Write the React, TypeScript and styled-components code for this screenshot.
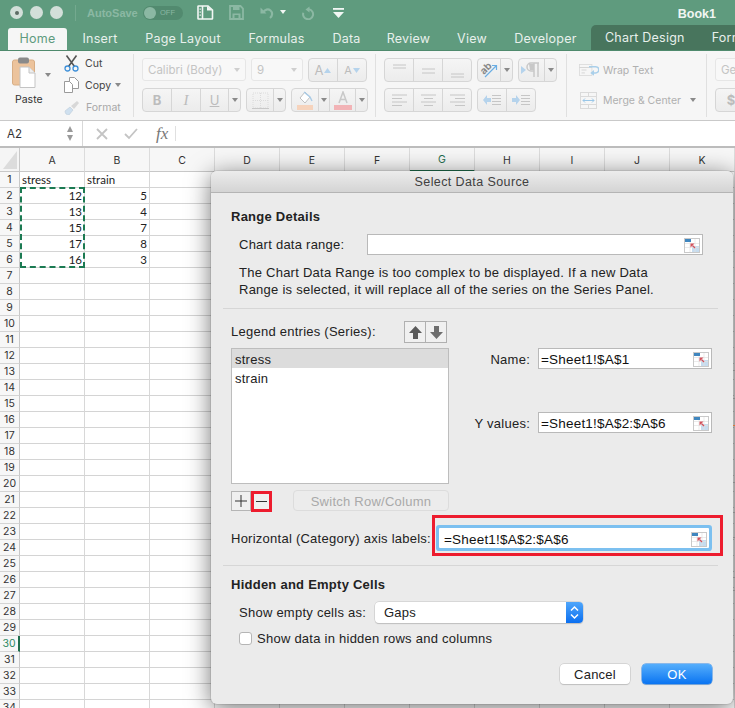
import React from "react";
import styled, { createGlobalStyle } from "styled-components";

const Global = createGlobalStyle`
  html, body { margin: 0; padding: 0; background: #fff; }
  * { box-sizing: border-box; }
  body { font-family: "Liberation Sans", Arial, sans-serif; }
`;

const Page = styled.div`
  position: relative;
  width: 735px;
  height: 708px;
  overflow: hidden;
  display: flex;
  flex-direction: column;
  background: #fff;
  font-family: "Liberation Sans", Arial, sans-serif;
`;

/* ---------- Title bar ---------- */
const TitleBar = styled.div`
  height: 25px;
  flex: none;
  background: #5f9b7e;
  display: flex;
  align-items: center;
  padding-left: 10px;
`;
const Light = styled.span<{ $dot?: boolean }>`
  width: 13px;
  height: 13px;
  border-radius: 50%;
  background: #d3dfd9;
  margin-right: 7px;
  display: flex;
  align-items: center;
  justify-content: center;
  &::after {
    content: "";
    width: 4px;
    height: 4px;
    border-radius: 50%;
    background: ${(p) => (p.$dot ? "#5d6b64" : "transparent")};
  }
`;
const TitleDivider = styled.span`
  width: 1px;
  height: 16px;
  background: #74a98f;
  margin: 0 11px 0 5px;
`;
const AutoSave = styled.span`
  font-size: 11px;
  font-weight: 700;
  color: #8bb8a3;
  width: 56px;
  padding-top: 1px;
`;
const Toggle = styled.span`
  width: 40px;
  height: 14px;
  border-radius: 7px;
  background: #528a6f;
  display: flex;
  align-items: center;
  padding-left: 1px;
  font-size: 7.5px;
  color: #8bb8a3;
  margin-right: 14px;
  &::before {
    content: "";
    width: 12px;
    height: 12px;
    border-radius: 50%;
    background: #8bb8a3;
    margin-right: 4px;
  }
`;
const QuickIcons = styled.div`
  display: flex;
  align-items: center;
  height: 25px;
`;
const BookTitle = styled.span`
  margin-left: auto;
  margin-right: 19px;
  padding-top: 2px;
  font-size: 12.5px;
  font-weight: 700;
  color: #f1f6f3;
`;

/* ---------- Tabs ---------- */
const TabBar = styled.div`
  height: 25px;
  flex: none;
  background: #5f9b7e;
  display: flex;
  align-items: flex-end;
  padding-left: 8px;
  font-family: "Inter", sans-serif;
  font-size: 12.5px;
  letter-spacing: 0.22px;
  overflow: hidden;
  white-space: nowrap;
`;
const Tab = styled.div<{ $w: number; $active?: boolean }>`
  width: ${(p) => p.$w}px;
  flex: none;
  height: 22px;
  padding-bottom: 2px;
  display: flex;
  align-items: center;
  justify-content: center;
  color: ${(p) => (p.$active ? "#5f9b7e" : "#e8f0ec")};
  background: ${(p) => (p.$active ? "#f6f6f6" : "transparent")};
  border-radius: 3px 3px 0 0;
`;
const ContextTab = styled.div`
  flex: 1;
  height: 25px;
  padding: 0 0 1px 14px;
  background: #48755d;
  border-radius: 5px 0 0 0;
  color: #e8f0ec;
  display: flex;
  align-items: center;
  gap: 27px;
`;

/* ---------- Ribbon ---------- */
const Ribbon = styled.div`
  height: 71px;
  flex: none;
  background: #f6f6f6;
  border-top: 1px solid #4f8a6d;
  border-bottom: 1px solid #c9c9c9;
  display: flex;
  overflow: hidden;
  font-family: "Inter", sans-serif;
`;
const Group = styled.div<{ $w: number; $pl: number }>`
  width: ${(p) => p.$w}px;
  flex: none;
  height: 63px;
  margin-top: 3px;
  padding-left: ${(p) => p.$pl}px;
  padding-top: 4px;
  border-right: 1px solid #e0e0e0;
  display: flex;
  flex-direction: column;
  gap: 6px;
`;
const ClipGroup = styled.div`
  width: 134px;
  flex: none;
  height: 63px;
  margin-top: 3px;
  border-right: 1px solid #e0e0e0;
  display: flex;
  font-size: 10.5px;
  color: #444;
`;
const PasteCol = styled.div`
  width: 64px;
  flex: none;
  position: relative;
  display: flex;
  flex-direction: column;
  padding-left: 12px;
  padding-top: 3px;
  gap: 5px;
`;
const PasteLabel = styled.span`
  margin-left: 3px;
  color: #333;
`;
const SmallCol = styled.div`
  display: flex;
  flex-direction: column;
  gap: 3px;
`;
const SmallRow = styled.div<{ $off?: boolean }>`
  height: 20px;
  display: flex;
  align-items: center;
  gap: 6px;
  margin-top: ${(p) => (p.$off ? 1 : 0)}px;
  color: ${(p) => (p.$off ? "#a8a8a8" : "#444")};
`;
const Arrow = styled.span<{ $c?: string }>`
  width: 0;
  height: 0;
  flex: none;
  border-left: 3px solid transparent;
  border-right: 3px solid transparent;
  border-top: 4px solid ${(p) => p.$c || "#8a8a8a"};
`;
const PasteArrow = styled(Arrow)`
  position: absolute;
  left: 45px;
  top: 19px;
`;
const CopyArrow = styled(Arrow)`
  margin-left: -2px;
`;
const RibbonRow = styled.div`
  display: flex;
  gap: 5px;
  height: 24px;
`;
const Combo = styled.div<{ $w: number }>`
  width: ${(p) => p.$w}px;
  height: 23px;
  flex: none;
  border: 1px solid #e6e6e6;
  border-radius: 3px;
  background: #f8f8f8;
  display: flex;
  align-items: center;
  justify-content: space-between;
  padding: 0 5px;
  font-size: 11.5px;
  color: #c4c4c4;
  white-space: nowrap;
`;
const Seg = styled.div`
  display: flex;
  height: 24px;
  flex: none;
  border: 1px solid #d6d6d6;
  border-radius: 4px;
  background: linear-gradient(#f5f5f5, #ececec);
  overflow: hidden;
`;
const SegCell = styled.div<{ $w: number }>`
  width: ${(p) => p.$w}px;
  flex: none;
  display: flex;
  align-items: center;
  justify-content: center;
  gap: 1px;
  color: #bcbcbc;
  font-size: 13px;
  font-weight: 700;
  border-right: 1px solid #d6d6d6;
  &:last-child { border-right: 0; }
`;
const ItalicGlyph = styled.span`
  font-family: "Liberation Serif", serif;
  font-style: italic;
  font-weight: 400;
  font-size: 15px;
`;
const UnderGlyph = styled.span`
  text-decoration: underline;
  font-weight: 400;
`;
const WrapRow = styled.div`
  height: 24px;
  display: flex;
  align-items: center;
  gap: 4px;
  font-size: 10.5px;
  color: #b0b0b0;
  white-space: nowrap;
`;
const MergeArrow = styled(Arrow)`
  margin-left: 5px;
`;

/* ---------- Formula bar ---------- */
const FormulaBar = styled.div`
  height: 27px;
  flex: none;
  background: #fff;
  border-bottom: 2px solid #bdbdbd;
  display: flex;
  align-items: center;
  font-family: "Inter", sans-serif;
`;
const NameBox = styled.div`
  width: 83px;
  height: 100%;
  flex: none;
  border-right: 1px solid #d8d8d8;
  display: flex;
  align-items: center;
  justify-content: space-between;
  padding: 0 9px 0 7px;
  font-size: 11.5px;
  color: #333;
`;
const Spinner = styled.span`
  display: flex;
  flex-direction: column;
  gap: 3px;
`;
const UpArrow = styled.span`
  width: 0;
  height: 0;
  border-left: 3px solid transparent;
  border-right: 3px solid transparent;
  border-bottom: 6px solid #9a9a9a;
`;
const DownArrow = styled(UpArrow)`
  border-bottom: 0;
  border-top: 6px solid #9a9a9a;
`;
const FormulaIcons = styled.div`
  display: flex;
  align-items: center;
  padding-left: 13px;
  gap: 16px;
`;
const Fx = styled.span`
  font-family: "Liberation Serif", serif;
  font-style: italic;
  font-size: 17px;
  color: #777;
  margin-left: 2px;
  padding-right: 7px;
  border-right: 1px solid #e0e0e0;
  line-height: 15px;
`;

/* ---------- Sheet ---------- */
const Sheet = styled.div`
  position: relative;
  flex: 1;
  display: grid;
  grid-template-columns: 20px repeat(11, 65px);
  grid-template-rows: 24px repeat(34, 16px);
  overflow: hidden;
  font-family: "Lato", sans-serif;
  font-size: 11.5px;
  color: #222;
`;
const Corner = styled.div`
  background: #f5f5f5;
  border-right: 1px solid #c8c8c8;
  border-bottom: 1px solid #c8c8c8;
  padding: 3px 2px 2px 3px;
  &::after {
    content: "";
    display: block;
    width: 100%;
    height: 100%;
    background: #dcdcdc;
    clip-path: polygon(100% 0, 100% 100%, 0 100%);
  }
`;
const ColHead = styled.div<{ $on?: boolean }>`
  background: #f7f7f7;
  border-right: 1px solid #dcdcdc;
  border-bottom: ${(p) => (p.$on ? "2px solid #1f6e4d" : "1px solid #c8c8c8")};
  color: ${(p) => (p.$on ? "#1f6e4d" : "#333")};
  display: flex;
  align-items: center;
  justify-content: center;
  padding-top: 1px;
  font-family: "Inter", sans-serif;
  font-size: 10.5px;
`;
const RowHead = styled.div<{ $on?: boolean }>`
  background: #f7f7f7;
  border-right: ${(p) => (p.$on ? "2px solid #1f6e4d" : "1px solid #c8c8c8")};
  border-bottom: 1px solid #d4d4d4;
  color: ${(p) => (p.$on ? "#2f8a63" : "#333")};
  display: flex;
  align-items: center;
  justify-content: center;
  font-family: "Inter", sans-serif;
  font-size: 10.5px;
`;
const Cell = styled.div<{ $num?: boolean }>`
  border-right: 1px solid #d8d8d8;
  border-bottom: 1px solid #d4d4d4;
  display: flex;
  align-items: center;
  justify-content: ${(p) => (p.$num ? "flex-end" : "flex-start")};
  padding: 0 2px;
  line-height: 15px;
  white-space: nowrap;
`;
const Marquee = styled.div`
  position: absolute;
  grid-column: 2 / 3;
  grid-row: 3 / 8;
  inset: -1px 0 0 0;
  border: 2px dashed #1b7a52;
  pointer-events: none;
`;

/* ---------- Dialog ---------- */
const Dialog = styled.div`
  position: absolute;
  left: 211px;
  top: 171px;
  width: 522px;
  height: 533px;
  background: #ebebeb;
  border-radius: 6px;
  box-shadow: 0 4px 24px rgba(0, 0, 0, 0.55), 0 0 0 1px rgba(0, 0, 0, 0.08);
  color: #222;
  font-size: 13px;
  letter-spacing: 0.25px;
  overflow: hidden;
`;
const DialogTitle = styled.div`
  height: 22px;
  background: linear-gradient(#ececec, #d4d4d4);
  border-bottom: 1px solid #b4b4b4;
  display: flex;
  align-items: center;
  justify-content: center;
  font-size: 12.5px;
  letter-spacing: 0.4px;
  color: #404040;
`;
const DialogBody = styled.div`
  padding: 0 21px 0 20px;
  display: flex;
  flex-direction: column;
`;
const SectionTitle = styled.div<{ $top: number }>`
  margin-top: ${(p) => p.$top}px;
  font-weight: 700;
  line-height: 16px;
  height: 16px;
`;
const RangeRow = styled.div`
  margin-top: 9px;
  margin-left: 8px;
  display: flex;
  align-items: center;
`;
const RangeLabel = styled.label`
  width: 128px;
  flex: none;
`;
const RefInput = styled.div<{ $w: number }>`
  width: ${(p) => p.$w}px;
  height: 21px;
  flex: none;
  background: #fff;
  border: 1px solid #b9b9b9;
  display: flex;
  align-items: center;
  justify-content: space-between;
  padding: 1px 2px 0 2px;
  font-size: 13.5px;
  letter-spacing: 0.2px;
  white-space: nowrap;
  color: #111;
`;
const Description = styled.p`
  margin: 9px 0 0 8px;
  line-height: 17px;
  white-space: nowrap;
`;
const Rule = styled.hr<{ $top: number }>`
  margin: ${(p) => p.$top}px -6px 0 -8px;
  border: 0;
  height: 1px;
  background: #d6d6d6;
  flex: none;
`;
const SeriesGrid = styled.div`
  display: grid;
  grid-template-columns: 218px 1fr;
  margin-top: 12px;
`;
const LegendHead = styled.div`
  display: flex;
  align-items: center;
  height: 22px;
  justify-content: space-between;
  padding-right: 2px;
`;
const LegendLabel = styled.span`
  margin-top: -1px;
`;
const MoveButtons = styled.div`
  display: flex;
  border: 1px solid #b0b0b0;
  background: #f0f0f0;
  height: 22px;
  width: 43px;
`;
const MoveCell = styled.span`
  flex: 1;
  display: flex;
  align-items: center;
  justify-content: center;
  border-right: 1px solid #b0b0b0;
  &:last-child { border-right: 0; }
`;
const SeriesList = styled.div`
  margin-top: 5px;
  height: 136px;
  background: #fff;
  border: 1px solid #bdbdbd;
`;
const SeriesItem = styled.div<{ $on?: boolean }>`
  height: 19px;
  line-height: 19px;
  padding: 1px 0 0 3px;
  background: ${(p) => (p.$on ? "#dcdcdc" : "transparent")};
`;
const FieldCol = styled.div`
  display: flex;
  flex-direction: column;
  gap: 43px;
  padding-top: 27px;
`;
const FieldRow = styled.div`
  display: flex;
  align-items: center;
  justify-content: flex-end;
  gap: 8px;
`;
const FieldLabel = styled.label`
  padding-top: 1px;
`;
const ToolRow = styled.div`
  display: flex;
  margin-top: 7px;
  height: 22px;
  align-items: flex-start;
`;
const PlusMinus = styled.div<{ $flag?: boolean }>`
  width: ${(p) => (p.$flag ? 21 : 20)}px;
  height: ${(p) => (p.$flag ? 21 : 20)}px;
  flex: none;
  border: ${(p) => (p.$flag ? "3px solid #ed1c2e" : "1px solid #b5b5b5")};
  background: #f0f0f0;
  display: flex;
  align-items: center;
  justify-content: center;
`;
const SwitchButton = styled.div`
  width: 156px;
  height: 21px;
  margin-left: 21px;
  margin-top: -1px;
  padding-top: 1px;
  border: 1px solid #dcdcdc;
  border-radius: 4px;
  background: #ececec;
  color: #a9a9a9;
  display: flex;
  align-items: center;
  justify-content: center;
`;
const AxisRow = styled.div`
  display: flex;
  align-items: center;
  justify-content: space-between;
  margin: 2px -11px 0 0;
`;
const AxisLabel = styled.span`
  padding-top: 6px;
`;
const Flag = styled.div`
  width: 291px;
  height: 41px;
  flex: none;
  border: 3px solid #ed1c2e;
  padding: 10px 11px 5px 4px;
`;
const FocusInput = styled(RefInput)`
  width: 100%;
  height: 20px;
  border: 0;
  box-shadow: 0 0 0 3px #7cc0f0;
  border-radius: 1px;
  padding: 2px 2px 0 5px;
`;
const EmptyRow = styled.div`
  display: flex;
  align-items: center;
  margin: 9px 0 0 8px;
`;
const EmptyLabel = styled.label`
  width: 136px;
  flex: none;
`;
const SelectBox = styled.div`
  width: 208px;
  height: 21px;
  background: #fff;
  border-radius: 4px;
  box-shadow: 0 0 0 0.5px #c4c4c4, 0 1px 1px rgba(0, 0, 0, 0.2);
  display: flex;
  align-items: center;
  justify-content: space-between;
  padding-left: 9px;
  overflow: hidden;
`;
const Stepper = styled.span`
  width: 17px;
  height: 100%;
  background: linear-gradient(#4fa6fb, #0b6ff0);
  display: flex;
  align-items: center;
  justify-content: center;
`;
const CheckRow = styled.div`
  display: flex;
  align-items: center;
  gap: 5px;
  margin: 8px 0 0 8px;
`;
const CheckBox = styled.span`
  width: 13px;
  height: 13px;
  background: #fff;
  border: 1px solid #b5b5b5;
  border-radius: 3px;
`;
const Actions = styled.div`
  display: flex;
  justify-content: flex-end;
  gap: 12px;
  margin-top: 18px;
`;
const DialogButton = styled.div<{ $primary?: boolean }>`
  width: 70px;
  height: 20px;
  border-radius: 4px;
  display: flex;
  align-items: center;
  justify-content: center;
  background: ${(p) => (p.$primary ? "linear-gradient(#55aefc, #0a74f2)" : "#fff")};
  color: ${(p) => (p.$primary ? "#fff" : "#222")};
  box-shadow: 0 0 0 0.5px ${(p) => (p.$primary ? "#2b86ea" : "#c0c0c0")}, 0 1px 1px rgba(0, 0, 0, 0.18);
`;

/* ---------- Chart peeking out at the right of the dialog ---------- */
const ChartMark = styled.span<{ $y: number; $c: string }>`
  position: absolute;
  right: 0;
  top: ${(p) => p.$y}px;
  width: 2px;
  height: 1px;
  background: ${(p) => p.$c};
`;

/* ---------- Drawings ---------- */
const Ico = styled.svg<{ $ml?: number; $mr?: number }>`
  flex: none;
  display: block;
  margin-left: ${(p) => p.$ml || 0}px;
  margin-right: ${(p) => p.$mr || 0}px;
`;

const RefIcon = () => (
  <Ico width="16" height="15" viewBox="0 0 16 15">
    <rect x="0.500" y="0.500" width="15" height="14" fill="#fff" stroke="#c9c9c9" />
    <rect x="8" y="8" width="7" height="6" fill="#c6dcef" />
    <path d="M1 5.500h14M1 9.500h14M6 1v13M11 1v13" stroke="#e2e2e2" strokeWidth="0.700" />
    <rect x="1" y="1" width="6" height="3" fill="#3f86bf" />
    <path d="M6.500 5.500h4l-4 4z" fill="#d2525c" />
    <path d="M8.500 7.500l2.500 2.500" stroke="#d2525c" strokeWidth="1.300" />
  </Ico>
);
const SidebarIcon = () => (
  <Ico width="17" height="15" viewBox="0 0 17 15">
    <path d="M1.500 1h9.500l4.500 4v8.500a.5.5 0 0 1-.5.5H1.500a.5.5 0 0 1-.5-.5V1.500a.5.5 0 0 1 .5-.5z" fill="none" stroke="#f2f7f4" strokeWidth="1.600" />
    <path d="M5.500 1v13" stroke="#f2f7f4" strokeWidth="1.600" />
    <path d="M3.200 3.500v1.200M3.200 6.500v1.200M3.200 9.500v1.200" stroke="#f2f7f4" strokeWidth="1.300" />
    <path d="M10 1v4.500h5.500z" fill="#f2f7f4" />
  </Ico>
);
const SaveIcon = () => (
  <Ico $ml={15} width="15" height="15" viewBox="0 0 15 15">
    <path d="M1 1h10.500L14 3.500V14H1z" fill="none" stroke="#8bb8a3" strokeWidth="1.800" />
    <path d="M4 1.500h6.500v3.500H4zM3.500 8.500h8V14h-8z" fill="#8bb8a3" />
    <rect x="5.500" y="10" width="4" height="3" fill="#5f9b7e" />
  </Ico>
);
const UndoIcon = () => (
  <Ico $ml={15} width="16" height="13" viewBox="0 0 16 13">
    <path d="M1.500 1.500v6h6z" fill="#8bb8a3" />
    <path d="M4 6.500C6 3.500 9 2.500 11.500 4.500c2.500 2 2 5.500-.5 7.500" fill="none" stroke="#8bb8a3" strokeWidth="2.200" />
  </Ico>
);
const RedoIcon = () => (
  <Ico $ml={15} width="14" height="14" viewBox="0 0 14 14">
    <path d="M8.500 0.500v6l-4-3z" fill="#8bb8a3" />
    <path d="M8 3.300a5 5 0 1 1-5.700 3.500" fill="none" stroke="#8bb8a3" strokeWidth="2" />
  </Ico>
);
const CustomizeIcon = () => (
  <Ico $ml={17} width="13" height="10" viewBox="0 0 13 10">
    <rect x="1" y="0" width="11" height="1.800" fill="#f2f7f4" />
    <path d="M1 4h11l-5.500 6z" fill="#f2f7f4" />
  </Ico>
);
const QuickCaret = styled(Arrow)`
  margin-left: 5px;
  margin-top: -2px;
`;
const PasteIcon = () => (
  <Ico width="24" height="31" viewBox="0 0 24 31">
    <rect x="0.500" y="3" width="22" height="25" rx="2" fill="#ecc39c" stroke="#d8ae85" />
    <rect x="6" y="0.500" width="11" height="6" rx="2" fill="#8a8a8a" />
    <path d="M8 10h9l6 6v14.500H8z" fill="#fff" stroke="#c4c4c4" />
    <path d="M17 10v6h6" fill="#eee" stroke="#c4c4c4" />
  </Ico>
);
const CutIcon = () => (
  <Ico width="15" height="17" viewBox="0 0 15 17">
    <path d="M2.500 0.500l8 11M12.500 0.500l-8 11" stroke="#555" strokeWidth="1.600" />
    <circle cx="3.500" cy="13.500" r="2.500" fill="none" stroke="#3d8fd8" strokeWidth="1.300" />
    <circle cx="11.500" cy="13.500" r="2.500" fill="none" stroke="#3d8fd8" strokeWidth="1.300" />
  </Ico>
);
const CopyIcon = () => (
  <Ico width="15" height="16" viewBox="0 0 15 16">
    <path d="M5.500 0.500h5l4 4v7h-9z" fill="#fff" stroke="#9a9a9a" />
    <path d="M0.500 4.500h5l3 3v8h-8z" fill="#fff" stroke="#9a9a9a" />
  </Ico>
);
const BrushIcon = () => (
  <Ico width="16" height="15" viewBox="0 0 16 15">
    <path d="M1 11l5-4 3 3-4 5c-2 0-4-1-4-4z" fill="#cfe0ef" stroke="#bccbd8" strokeWidth="0.600" />
    <path d="M7 6l6-5 2 2-5 6z" fill="#d8d8d8" />
  </Ico>
);
const LetterA = styled.span<{ $s: number }>`
  font-size: ${(p) => p.$s}px;
  font-weight: 400;
  color: #bcbcbc;
`;
const SizeA = ({ up }: { up: boolean }) => (
  <Ico width="7" height="5" viewBox="0 0 7 5">
    <path d={up ? "M0 5l3.500-5L7 5z" : "M0 0l3.500 5L7 0z"} fill="#b5d3ec" />
  </Ico>
);
const BorderIcon = () => (
  <Ico width="17" height="17" viewBox="0 0 17 17">
    <path d="M1 1h15v15H1zM8.500 1v15M1 8.500h15" fill="none" stroke="#dcdcdc" strokeDasharray="1 1" />
    <path d="M0 16.500h17" stroke="#c8c8c8" />
  </Ico>
);
const FillIcon = () => (
  <Ico width="18" height="19" viewBox="0 0 18 19">
    <path d="M4 7l5-6 5 5-5 6z" fill="#fff" stroke="#c0c0c0" />
    <path d="M8 1l6 5 2 4" fill="none" stroke="#a9cbe6" strokeWidth="1.400" />
    <rect x="1" y="14" width="16" height="5" fill="#f6d3bc" />
  </Ico>
);
const ColorAIcon = () => (
  <Ico width="18" height="19" viewBox="0 0 18 19">
    <path d="M5 12L9 1l4 11M6.500 8.500h5" fill="none" stroke="#c8c8c8" strokeWidth="1.500" />
    <rect x="0" y="14" width="18" height="5" fill="#f2b3b6" />
  </Ico>
);
const Lines = ({ y, x }: { y: number[]; x: [number, number][] }) => (
  <Ico width="17" height="17" viewBox="0 0 17 17">
    {y.map((v, i) => (
      <path key={i} d={`M${x[i][0]} ${v}H${x[i][1]}`} stroke="#c6c6c6" />
    ))}
  </Ico>
);
const OrientIcon = () => (
  <Ico width="18" height="18" viewBox="0 0 18 18">
    <text x="1" y="11" fontSize="10" fontFamily="Inter, sans-serif" fill="#888" transform="rotate(-45 6 9)">ab</text>
    <path d="M5 16L16 5M12 4.500h4.500V9" fill="none" stroke="#6aaee4" strokeWidth="1.200" />
  </Ico>
);
const ParaIcon = () => (
  <Ico width="22" height="16" viewBox="0 0 22 16">
    <path d="M0 4l5 4-5 4z" fill="#b5d3ec" />
    <path d="M13 1v14M17 1v14M18 1h-8a4 4 0 0 0 0 8h3" fill="none" stroke="#c8c8c8" strokeWidth="1.500" />
    <path d="M8 2h5v6H9z" fill="#c8c8c8" />
  </Ico>
);
const IndentIcon = ({ flip }: { flip?: boolean }) => (
  <Ico width="18" height="13" viewBox="0 0 18 13">
    <path d={flip ? "M0 4h4V1l4 5-4 5V8H0z" : "M8 4H4V1L0 6l4 5V8h4z"} fill="#b5d3ec" />
    <path d="M9 1.500h9M9 4.500h9M9 7.500h9M9 10.500h9" stroke="#c6c6c6" />
  </Ico>
);
const WrapIcon = () => (
  <Ico width="20" height="14" viewBox="0 0 24 16">
    <rect x="0.500" y="1.500" width="15" height="13" fill="none" stroke="#dadada" />
    <path d="M0.500 5h15M3 8h6M3 11.500h4" stroke="#cfcfcf" />
    <path d="M12 4h8a3 3 0 0 1 0 7.500h-3" fill="none" stroke="#a9cfea" strokeWidth="1.800" />
    <path d="M18 8v7l-4.500-3.500z" fill="#a9cfea" />
  </Ico>
);
const MergeIcon = () => (
  <Ico width="17" height="17" viewBox="0 0 17 17" $ml={1} $mr={2}>
    <rect x="0.500" y="0.500" width="16" height="16" fill="none" stroke="#dadada" />
    <path d="M0.500 4.500h16M0.500 12.500h16M8.500 0.500v4M8.500 12.500v4" stroke="#dadada" />
    <path d="M3 8.500h11M5 6.500l-2 2 2 2M12 6.500l2 2-2 2" fill="none" stroke="#9ac7e8" />
  </Ico>
);
const CrossIcon = () => (
  <Ico width="12" height="12" viewBox="0 0 12 12">
    <path d="M1 1l10 10M11 1L1 11" stroke="#c4c4c4" strokeWidth="1.800" />
  </Ico>
);
const TickIcon = () => (
  <Ico width="14" height="12" viewBox="0 0 14 12">
    <path d="M1 6l4 4 8-9" fill="none" stroke="#c4c4c4" strokeWidth="1.800" />
  </Ico>
);
const MoveArrow = ({ down, c }: { down?: boolean; c: string }) => (
  <Ico width="13" height="13" viewBox="0 0 13 13">
    <path d={down ? "M4 0h5v6h4l-6.500 7L0 6h4z" : "M4 13h5V7h4L6.500 0 0 7h4z"} fill={c} />
  </Ico>
);
const PlusIcon = () => (
  <Ico width="12" height="12" viewBox="0 0 12 12">
    <path d="M6 0v12M0 6h12" stroke="#333" />
  </Ico>
);
const MinusIcon = () => (
  <Ico width="11" height="3" viewBox="0 0 11 3">
    <path d="M0 1.500h11" stroke="#333" />
  </Ico>
);
const StepperIcon = () => (
  <Ico width="9" height="15" viewBox="0 0 9 15">
    <path d="M1 5.500l3.500-3.500L8 5.500M1 9.500L4.500 13 8 9.500" fill="none" stroke="#fff" strokeWidth="1.500" />
  </Ico>
);

/* ---------- Data ---------- */
const COLS = ["A", "B", "C", "D", "E", "F", "G", "H", "I", "J", "K"];
const ROWS = Array.from({ length: 34 }, (_, i) => i + 1);
const DATA: Record<number, [string, string]> = {
  1: ["stress", "strain"],
  2: ["12", "5"],
  3: ["13", "4"],
  4: ["15", "7"],
  5: ["17", "8"],
  6: ["16", "3"],
};
const MARKS: [number, string][] = [
  [370, "#8a8a8a"],
  [398, "#8a8a8a"],
  [425, "#d9773a"],
  [482, "#8a8a8a"],
  [512, "#8a8a8a"],
  [537, "#8a8a8a"],
  [577, "#8a8a8a"],
  [590, "#8a8a8a"],
];

export default function App() {
  return (
    <Page>
      <Global />
      <TitleBar>
        <Light $dot />
        <Light />
        <Light />
        <TitleDivider />
        <AutoSave>AutoSave</AutoSave>
        <Toggle>OFF</Toggle>
        <QuickIcons>
          <SidebarIcon />
          <SaveIcon />
          <UndoIcon />
          <QuickCaret $c="#f2f7f4" />
          <RedoIcon />
          <CustomizeIcon />
        </QuickIcons>
        <BookTitle>Book1</BookTitle>
      </TitleBar>

      <TabBar>
        <Tab $w={59} $active>Home</Tab>
        <Tab $w={66}>Insert</Tab>
        <Tab $w={100}>Page Layout</Tab>
        <Tab $w={87}>Formulas</Tab>
        <Tab $w={53}>Data</Tab>
        <Tab $w={71}>Review</Tab>
        <Tab $w={56}>View</Tab>
        <Tab $w={91}>Developer</Tab>
        <ContextTab>
          <span>Chart Design</span>
          <span>Format</span>
        </ContextTab>
      </TabBar>

      <Ribbon>
        <ClipGroup>
          <PasteCol>
            <PasteIcon />
            <PasteLabel>Paste</PasteLabel>
            <PasteArrow />
          </PasteCol>
          <SmallCol>
            <SmallRow><CutIcon />Cut</SmallRow>
            <SmallRow><CopyIcon />Copy<CopyArrow /></SmallRow>
            <SmallRow $off><BrushIcon />Format</SmallRow>
          </SmallCol>
        </ClipGroup>

        <Group $w={242} $pl={8}>
          <RibbonRow>
            <Combo $w={104}>Calibri (Body)<Arrow $c="#cfcfcf" /></Combo>
            <Combo $w={52}>9<Arrow $c="#cfcfcf" /></Combo>
            <Seg>
              <SegCell $w={29}><LetterA $s={13}>A</LetterA><SizeA up /></SegCell>
              <SegCell $w={28}><LetterA $s={11}>A</LetterA><SizeA up={false} /></SegCell>
            </Seg>
          </RibbonRow>
          <RibbonRow>
            <Seg>
              <SegCell $w={29}>B</SegCell>
              <SegCell $w={29}><ItalicGlyph>I</ItalicGlyph></SegCell>
              <SegCell $w={28}><UnderGlyph>U</UnderGlyph></SegCell>
              <SegCell $w={11}><Arrow /></SegCell>
            </Seg>
            <Seg>
              <SegCell $w={27}><BorderIcon /></SegCell>
              <SegCell $w={11}><Arrow /></SegCell>
            </Seg>
            <Seg>
              <SegCell $w={27}><FillIcon /></SegCell>
              <SegCell $w={11}><Arrow /></SegCell>
              <SegCell $w={26}><ColorAIcon /></SegCell>
              <SegCell $w={11}><Arrow /></SegCell>
            </Seg>
          </RibbonRow>
        </Group>

        <Group $w={191} $pl={8}>
          <RibbonRow>
            <Seg>
              <SegCell $w={29}><Lines y={[3, 6]} x={[[2, 15], [2, 15]]} /></SegCell>
              <SegCell $w={29}><Lines y={[7, 11]} x={[[2, 15], [2, 15]]} /></SegCell>
              <SegCell $w={28}><Lines y={[12, 15]} x={[[2, 15], [2, 15]]} /></SegCell>
            </Seg>
            <Seg>
              <SegCell $w={23}><OrientIcon /></SegCell>
              <SegCell $w={11}><Arrow $c="#8a8a8a" /></SegCell>
            </Seg>
            <Seg>
              <SegCell $w={26}><ParaIcon /></SegCell>
              <SegCell $w={11}><Arrow /></SegCell>
            </Seg>
          </RibbonRow>
          <RibbonRow>
            <Seg>
              <SegCell $w={29}><Lines y={[3, 6.5, 10, 13.5]} x={[[1, 16], [1, 11], [1, 16], [1, 11]]} /></SegCell>
              <SegCell $w={29}><Lines y={[3, 6.5, 10, 13.5]} x={[[1, 16], [4, 13], [1, 16], [4, 13]]} /></SegCell>
              <SegCell $w={28}><Lines y={[3, 6.5, 10, 13.5]} x={[[1, 16], [6, 16], [1, 16], [6, 16]]} /></SegCell>
            </Seg>
            <Seg>
              <SegCell $w={29}><IndentIcon /></SegCell>
              <SegCell $w={28}><IndentIcon flip /></SegCell>
            </Seg>
          </RibbonRow>
        </Group>

        <Group $w={140} $pl={12}>
          <RibbonRow><WrapRow><WrapIcon />Wrap Text</WrapRow></RibbonRow>
          <RibbonRow><WrapRow><MergeIcon />Merge &amp; Center<MergeArrow /></WrapRow></RibbonRow>
        </Group>

        <Group $w={40} $pl={8}>
          <RibbonRow><Combo $w={40}>Ge</Combo></RibbonRow>
          <RibbonRow><Seg><SegCell $w={30}>$</SegCell></Seg></RibbonRow>
        </Group>
      </Ribbon>

      <FormulaBar>
        <NameBox>
          A2
          <Spinner><UpArrow /><DownArrow /></Spinner>
        </NameBox>
        <FormulaIcons>
          <CrossIcon />
          <TickIcon />
          <Fx>fx</Fx>
        </FormulaIcons>
      </FormulaBar>

      <Sheet>
        <Corner />
        {COLS.map((c) => (
          <ColHead key={c} $on={c === "G"}>{c}</ColHead>
        ))}
        {ROWS.map((r) => (
          <React.Fragment key={r}>
            <RowHead $on={r === 30}>{r}</RowHead>
            {COLS.map((c, i) => {
              const v = i < 2 && DATA[r] ? DATA[r][i] : "";
              return <Cell key={c} $num={r > 1}>{v}</Cell>;
            })}
          </React.Fragment>
        ))}
        <Marquee />
      </Sheet>

      <Dialog>
        <DialogTitle>Select Data Source</DialogTitle>
        <DialogBody>
          <SectionTitle $top={16}>Range Details</SectionTitle>
          <RangeRow>
            <RangeLabel>Chart data range:</RangeLabel>
            <RefInput $w={336}><span /><RefIcon /></RefInput>
          </RangeRow>
          <Description>
            The Chart Data Range is too complex to be displayed. If a new Data
            <br />
            Range is selected, it will replace all of the series on the Series Panel.
          </Description>
          <Rule $top={10} />
          <SeriesGrid>
            <div>
              <LegendHead>
                <LegendLabel>Legend entries (Series):</LegendLabel>
                <MoveButtons>
                  <MoveCell><MoveArrow c="#5a5a5a" /></MoveCell>
                  <MoveCell><MoveArrow down c="#6e6e6e" /></MoveCell>
                </MoveButtons>
              </LegendHead>
              <SeriesList>
                <SeriesItem $on>stress</SeriesItem>
                <SeriesItem>strain</SeriesItem>
              </SeriesList>
            </div>
            <FieldCol>
              <FieldRow>
                <FieldLabel>Name:</FieldLabel>
                <RefInput $w={174}>=Sheet1!$A$1<RefIcon /></RefInput>
              </FieldRow>
              <FieldRow>
                <FieldLabel>Y values:</FieldLabel>
                <RefInput $w={174}>=Sheet1!$A$2:$A$6<RefIcon /></RefInput>
              </FieldRow>
            </FieldCol>
          </SeriesGrid>
          <ToolRow>
            <PlusMinus><PlusIcon /></PlusMinus>
            <PlusMinus $flag><MinusIcon /></PlusMinus>
            <SwitchButton>Switch Row/Column</SwitchButton>
          </ToolRow>
          <AxisRow>
            <AxisLabel>Horizontal (Category) axis labels:</AxisLabel>
            <Flag>
              <FocusInput $w={0}>=Sheet1!$A$2:$A$6<RefIcon /></FocusInput>
            </Flag>
          </AxisRow>
          <Rule $top={9} />
          <SectionTitle $top={11}>Hidden and Empty Cells</SectionTitle>
          <EmptyRow>
            <EmptyLabel>Show empty cells as:</EmptyLabel>
            <SelectBox>Gaps<Stepper><StepperIcon /></Stepper></SelectBox>
          </EmptyRow>
          <CheckRow>
            <CheckBox />
            <span>Show data in hidden rows and columns</span>
          </CheckRow>
          <Actions>
            <DialogButton>Cancel</DialogButton>
            <DialogButton $primary>OK</DialogButton>
          </Actions>
        </DialogBody>
      </Dialog>
      {MARKS.map(([y, c]) => (
        <ChartMark key={y} $y={y} $c={c} />
      ))}
    </Page>
  );
}
